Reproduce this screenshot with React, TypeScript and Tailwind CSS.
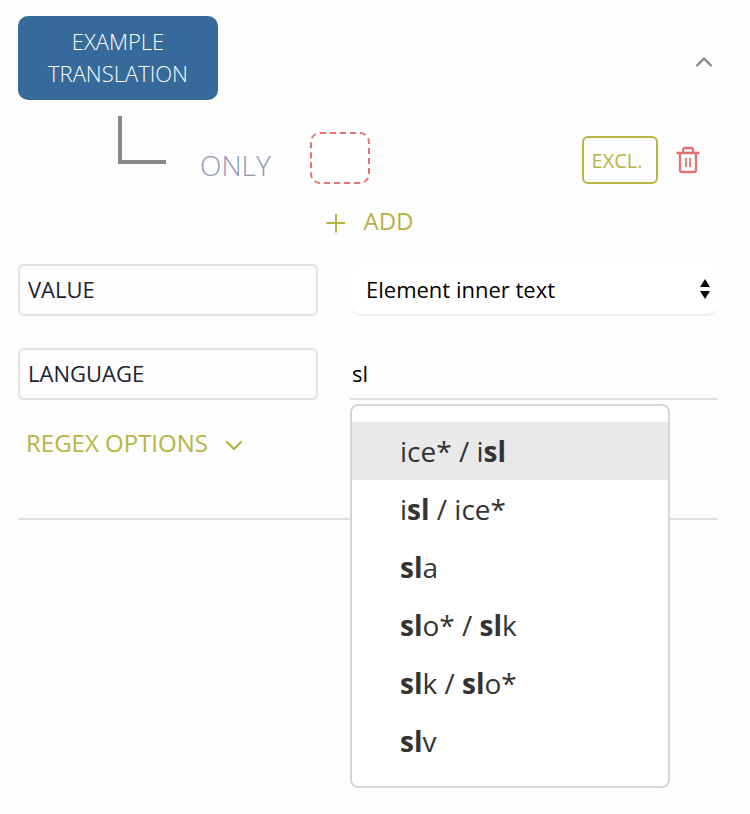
import { useState } from "react";

type Part = { text: string; match?: boolean };

const suggestions: Part[][] = [
  [{ text: "ice* / i" }, { text: "sl", match: true }],
  [{ text: "i" }, { text: "sl", match: true }, { text: " / ice*" }],
  [{ text: "sl", match: true }, { text: "a" }],
  [{ text: "sl", match: true }, { text: "o* / " }, { text: "sl", match: true }, { text: "k" }],
  [{ text: "sl", match: true }, { text: "k / " }, { text: "sl", match: true }, { text: "o*" }],
  [{ text: "sl", match: true }, { text: "v" }],
];

function Chevron({ up = false }: { up?: boolean }) {
  return (
    <svg width="20" height="12" viewBox="0 0 20 12" fill="none" stroke="currentColor" strokeWidth="2.3" strokeLinecap="round" strokeLinejoin="round" aria-hidden="true">
      <path d={up ? "M3 9.5L10 2.5L17 9.5" : "M3 3L10 10L17 3"} />
    </svg>
  );
}

function PlusIcon() {
  return (
    <svg width="20" height="20" viewBox="0 0 20 20" fill="none" stroke="currentColor" strokeWidth="2" aria-hidden="true">
      <path d="M11 1V19.5M1.5 10H20" />
    </svg>
  );
}

function TrashIcon() {
  return (
    <svg width="24" height="28" viewBox="0 0 24 28" fill="none" stroke="currentColor" strokeWidth="2.3" strokeLinejoin="round" aria-hidden="true">
      <path d="M.5 7H23.5M7 7V4.5Q7 2 9 2H15Q17 2 17 4.5V7M4 7V24Q4 26 6 26H18Q20 26 20 24V7" />
      <path d="M10 12V21M14 12V21" strokeWidth="1.8" />
    </svg>
  );
}

function CornerLine() {
  return (
    <svg width="48" height="48" viewBox="0 0 48 48" fill="none" stroke="#888888" strokeWidth="4" aria-hidden="true">
      <path d="M2 0V46H48" />
    </svg>
  );
}

export default function App() {
  const [language, setLanguage] = useState("sl");
  return (
    <main className="min-h-screen bg-[#fdfdfd] pt-4 pr-8 pl-[18px] font-['Open_Sans',sans-serif] text-[22px] leading-8">
      <header className="flex items-center justify-between">
        <button type="button" className="w-[200px] rounded-[10px] bg-[#356a9a] px-6 pt-[9px] pb-[11px] font-light text-white">
          EXAMPLE TRANSLATION
        </button>
        <button type="button" aria-label="Collapse" className="mr-1 pt-2 text-[#888888]">
          <Chevron up />
        </button>
      </header>

      <div className="mt-4 flex items-start">
        <div className="ml-[100px]">
          <CornerLine />
        </div>
        <span className="mt-8 ml-[34px] w-[110px] text-[28px] leading-[34px] font-light text-[#8e99b3]">ONLY</span>
        <button type="button" aria-label="Select element" className="mt-4 h-[52px] w-[60px] rounded-[10px] border-2 border-dashed border-[#e57373] bg-white" />
        <div className="mt-5 ml-auto flex items-center gap-[18px] pr-[18px]">
          <button type="button" className="h-12 w-[76px] rounded-md border-2 border-[#b8b444] pt-0.5 pr-[6px] text-xl text-[#b8b444]">
            EXCL.
          </button>
          <button type="button" aria-label="Delete" className="text-[#e57373]">
            <TrashIcon />
          </button>
        </div>
      </div>

      <div className="mt-5 flex justify-center pl-[3px]">
        <button type="button" className="flex items-center gap-[18px] text-2xl leading-[34px] text-[#b8b444]">
          <span className="pt-1">
            <PlusIcon />
          </span>
          ADD
        </button>
      </div>

      <div className="mt-[26px] grid grid-cols-[300px_1fr] gap-8">
        <label htmlFor="value" className="flex h-[52px] items-center rounded-md border-2 border-[#e0e0e0] px-2 pb-0.5 text-[#1a2233]">
          VALUE
        </label>
        <div className="relative">
          <select id="value" className="h-[52px] w-full appearance-none rounded-xl border-b-2 border-[#f0f0f0] bg-white px-4 text-black">
            <option>Element inner text</option>
          </select>
          <svg className="pointer-events-none absolute top-[15px] right-2 h-5 w-[10px]" viewBox="0 0 10 20" aria-hidden="true">
            <path d="M5 0L10 8H0ZM5 20L0 12H10Z" />
          </svg>
        </div>

        <label htmlFor="language" className="flex h-[52px] items-center rounded-md border-2 border-[#e0e0e0] px-2 pb-0.5 text-[#1a2233]">
          LANGUAGE
        </label>
        <div className="relative">
          <input
            id="language"
            role="combobox"
            aria-expanded="true"
            aria-controls="language-list"
            value={language}
            onChange={(e) => setLanguage(e.target.value)}
            className="h-[52px] w-full border-b-2 border-[#e0e0e0] bg-transparent px-0.5 text-black outline-none"
          />
          <ul
            id="language-list"
            role="listbox"
            className="absolute top-14 left-0 z-10 w-80 rounded-lg border-2 border-[#d6d6d6] bg-white py-4 text-[28px] text-[#333333]"
          >
            {suggestions.map((parts, i) => (
              <li
                key={i}
                role="option"
                aria-selected={i === 0}
                className="flex h-[58px] items-center px-12 whitespace-pre aria-selected:bg-[#e9e9e9]"
              >
                {parts.map((part, j) =>
                  part.match ? <b key={j} className="font-bold">{part.text}</b> : <span key={j}>{part.text}</span>
                )}
              </li>
            ))}
          </ul>
        </div>
      </div>

      <button type="button" className="mt-7 flex items-center gap-4 pl-2 text-2xl leading-[30px] text-[#b8b444]">
        REGEX OPTIONS
        <span className="pt-1">
          <Chevron />
        </span>
      </button>
      <hr className="mt-[60px] border-t-2 border-[#e0e0e0]" />
    </main>
  );
}
